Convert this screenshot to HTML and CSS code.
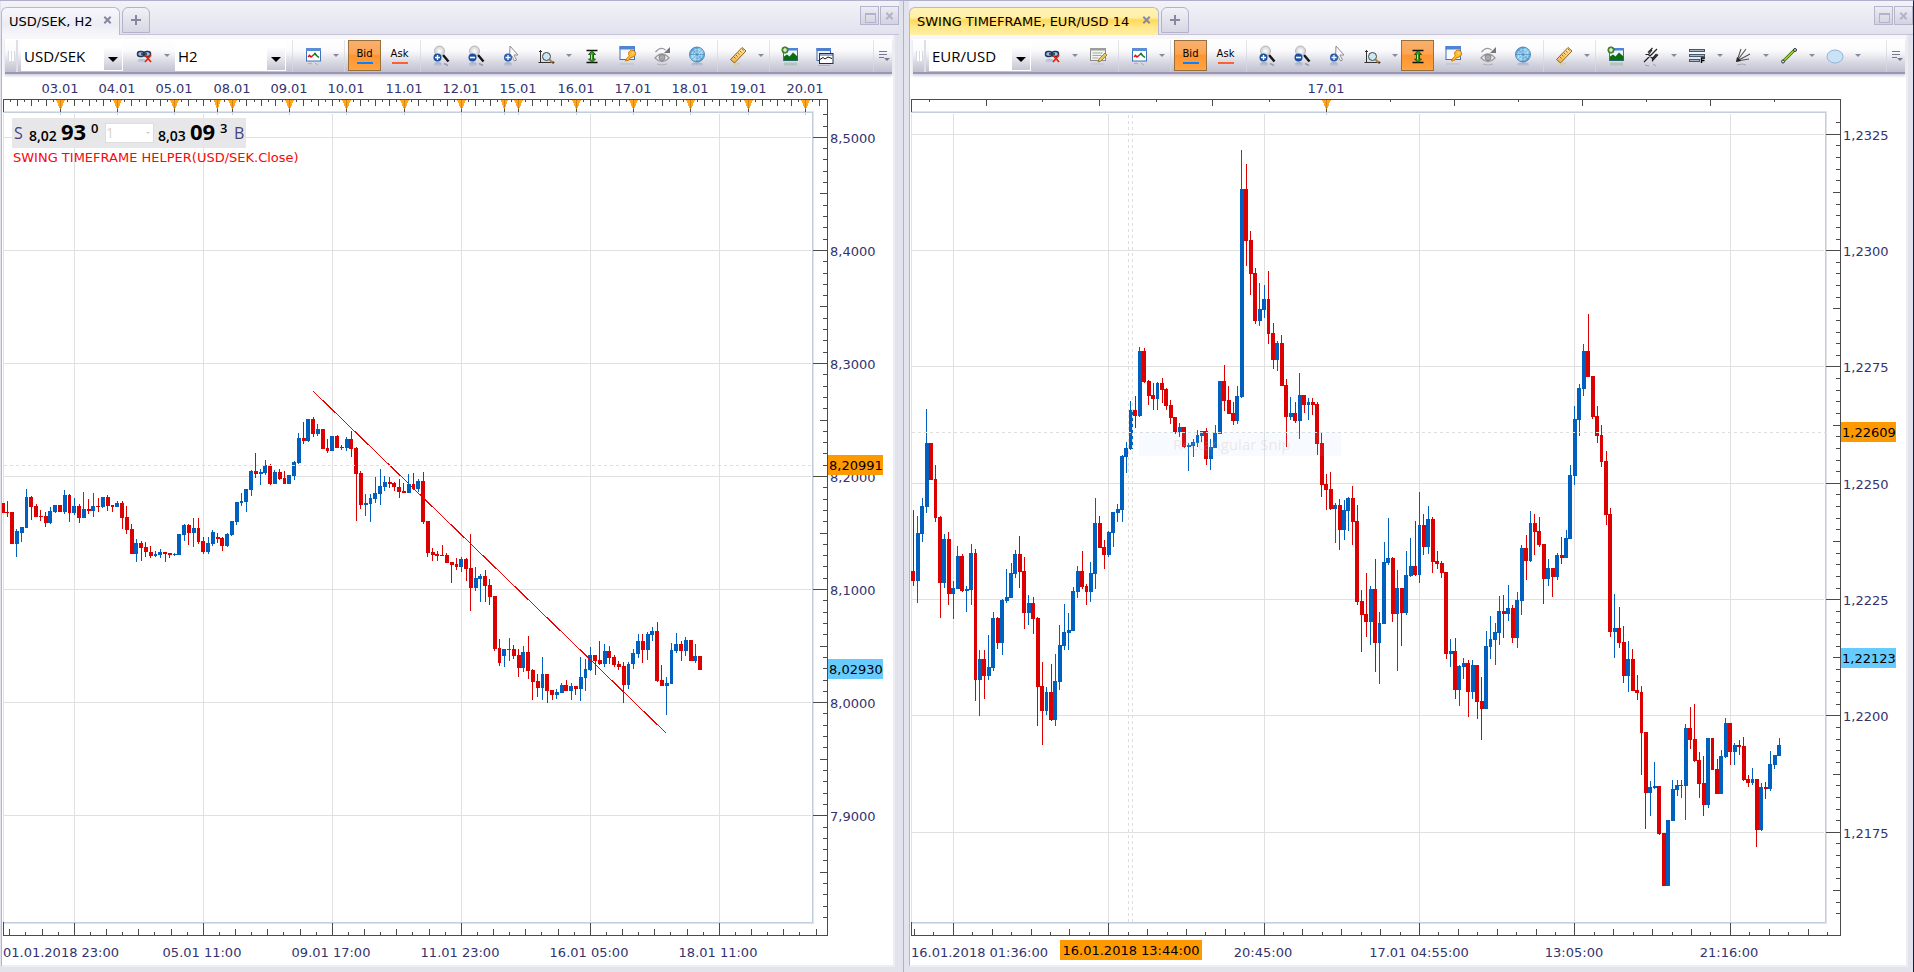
FILE: index.html
```html
<!DOCTYPE html>
<html lang="en">
<head>
<meta charset="utf-8">
<title>Trading charts</title>
<link rel="stylesheet" href="styles.css">
</head>
<body>
<svg class="defs" aria-hidden="true">
  <defs>
    <linearGradient id="gOrange" x1="0" y1="0" x2="0" y2="1"><stop offset="0" stop-color="#ffe9a8"/><stop offset="1" stop-color="#f2b040"/></linearGradient>
    <linearGradient id="gGlobe" x1="0" y1="0" x2="1" y2="1"><stop offset="0" stop-color="#3f86c4"/><stop offset="0.5" stop-color="#a5dcf5"/><stop offset="1" stop-color="#3d8cc8"/></linearGradient>
    <radialGradient id="gGlass"><stop offset="0" stop-color="#ffffff"/><stop offset="1" stop-color="#cfcfd2"/></radialGradient>
    <linearGradient id="gFade" x1="0" y1="0" x2="0" y2="1"><stop offset="0" stop-color="#5577b0" stop-opacity="0.45"/><stop offset="1" stop-color="#5577b0" stop-opacity="0"/></linearGradient>

    <symbol id="i-unlink" viewBox="0 0 24 24">
      <rect x="5.500" y="7.500" width="6.500" height="5" rx="2.500" fill="#9fc0e8" stroke="#26364f" stroke-width="1.500"/>
      <rect x="12" y="7.500" width="6.500" height="5" rx="2.500" fill="#9fc0e8" stroke="#26364f" stroke-width="1.500"/>
      <path d="M9 10h6" stroke="#26364f" stroke-width="1.600"/>
      <path d="M13 11l6 7M19 11l-6 7" stroke="#f02000" stroke-width="1.800"/>
      <ellipse cx="9.500" cy="17" rx="4" ry="2" fill="url(#gFade)"/>
    </symbol>
    <symbol id="i-chart" viewBox="0 0 24 24">
      <rect x="5.500" y="4.500" width="14" height="12.500" fill="#fff" stroke="#3f70b8"/>
      <rect x="5" y="4" width="15" height="3" fill="#5a8cd8"/>
      <path d="M7 13l1.500-1.500 1.500 1.500 2.500-2" stroke="#e01010" stroke-width="1.600" fill="none"/>
      <path d="M12.500 11l1.500-1.500 1.500 2 2.500 2" stroke="#0a7a20" stroke-width="1.600" fill="none"/>
      <path d="M7 20l2-1 2 1" stroke="#e89090" fill="none"/><path d="M14 19l3 2" stroke="#90c0a0" fill="none"/>
    </symbol>
    <symbol id="i-glass" viewBox="0 0 24 24">
      <path d="M14 11l5.500 6.500" stroke="#151515" stroke-width="2.400"/>
      <circle cx="10.500" cy="7" r="5" fill="url(#gGlass)" stroke="#b8b8bc"/>
      <circle cx="8.500" cy="13.500" r="4" fill="#1d4f9f"/>
      <ellipse cx="9" cy="20.500" rx="4" ry="2.500" fill="url(#gFade)"/>
      <path d="M15 19.500l4 2" stroke="#9a9aa4" stroke-width="1.500"/>
    </symbol>
    <symbol id="i-zoomin" viewBox="0 0 24 24"><use href="#i-glass"/><path d="M6 13.500h5M8.500 11v5" stroke="#fff" stroke-width="1.400"/></symbol>
    <symbol id="i-zoomout" viewBox="0 0 24 24"><use href="#i-glass"/><path d="M6 13.500h5" stroke="#fff" stroke-width="1.600"/></symbol>
    <symbol id="i-cursor" viewBox="0 0 24 24">
      <path d="M11 2l8 9h-4l2.500 5-2 1-2.500-5-2.500 2z" fill="#fafafa" stroke="#8c8c90"/>
      <circle cx="9" cy="13.500" r="4" fill="#2a5ca8"/><path d="M6.500 13.500h5M9 11v5" stroke="#fff" stroke-width="1.300"/>
      <ellipse cx="9" cy="20.500" rx="4" ry="2.500" fill="url(#gFade)"/>
    </symbol>
    <symbol id="i-axis" viewBox="0 0 24 24">
      <path d="M6.500 6v13M5 8l1.500-1.500L8 8M4.500 18.500H20M18.500 17l1.500 1.500-1.500 1.500" stroke="#333" fill="none"/>
      <circle cx="12.500" cy="12.500" r="4" fill="#c8eaf5" stroke="#444"/><path d="M15.500 15.500l3 3" stroke="#c87820" stroke-width="2"/>
    </symbol>
    <symbol id="i-height" viewBox="0 0 24 24">
      <path d="M6.500 6.500h11M6.500 18.500h11" stroke="#111" stroke-width="1.400"/>
      <path d="M12 6.500l3.500 4h-2v4.500h2l-3.500 3.500-3.500-3.500h2v-4.500h-2z" fill="#2e9a18" stroke="#0d4008" stroke-width="0.800"/>
      <path d="M11.500 10.500v5" stroke="#b0ee90"/>
    </symbol>
    <symbol id="i-key" viewBox="0 0 24 24">
      <rect x="5" y="3" width="14.500" height="12.500" fill="#f6f9ff" stroke="#3f70b8"/><rect x="4.500" y="2" width="15.500" height="3.500" fill="#4f83d4"/>
      <path d="M10.500 17l1-2.500 3-2.500a3.500 3.500 0 1 1 3.500 1l-3 1-1 2z" fill="#ffbe30" stroke="#d07808"/>
      <path d="M17 9.500l1.500-1" stroke="#fff4c0"/>
      <path d="M5 20h14" stroke="#c3c8dc" stroke-width="2"/>
    </symbol>
    <symbol id="i-eye" viewBox="0 0 24 24">
      <path d="M5 14q7-8 14 0-7 7-14 0z" fill="#f2f2f2" stroke="#9a9a9e" stroke-width="1.300"/><circle cx="12" cy="13.500" r="3" fill="#aaa" stroke="#858588"/>
      <path d="M5.500 8q5-6 10-2" stroke="#9a9a9e" fill="none" stroke-width="1.300"/><path d="M20 3v6h-6z" fill="#77777b"/>
      <path d="M7 20q5 2 10 0" stroke="#b0b0b8" fill="none"/>
    </symbol>
    <symbol id="i-globe" viewBox="0 0 24 24">
      <circle cx="12" cy="10.500" r="7.500" fill="url(#gGlobe)" stroke="#3378b0" stroke-width="0.800"/>
      <circle cx="12" cy="10.500" r="5" fill="none" stroke="#d8f2ff" stroke-width="0.600"/><circle cx="12" cy="10.500" r="2.500" fill="none" stroke="#d8f2ff" stroke-width="0.600"/>
      <path d="M4.500 10.500h15M12 3v15M7 5.500l10 10M17 5.500l-10 10" stroke="#2c74b0" stroke-width="0.500"/>
      <ellipse cx="12" cy="20.500" rx="6" ry="2" fill="url(#gFade)"/>
    </symbol>
    <symbol id="i-ruler" viewBox="0 0 24 24">
      <path d="M4.500 15.500L16 3.500l4 3.500L8.500 19z" fill="url(#gOrange)" stroke="#8f6418"/>
      <path d="M8 13l1.500 1.500M10 11l1.500 1.500M12 9l1.500 1.500M14 7l1.500 1.500M16 5l1.500 1.500" stroke="#7a5412" stroke-width="0.800"/>
      <path d="M8 21l6-2" stroke="#dccaa0" stroke-width="1.500"/>
    </symbol>
    <symbol id="i-image" viewBox="0 0 24 24">
      <rect x="5.500" y="4.500" width="14" height="12" fill="#eaf4ff" stroke="#3b6cc0"/><rect x="8" y="4" width="12" height="2.500" fill="#4f83d4"/>
      <path d="M6 16.500v-4l3-2 2.500 2 3.500-4 4.500 4v4z" fill="#0d6b10"/>
      <circle cx="7" cy="6" r="3.200" fill="#4f9a28" stroke="#2d6612" stroke-width="0.700"/><path d="M5 6h4M7 4v4" stroke="#fff" stroke-width="1.200"/>
      <rect x="6" y="18.500" width="13" height="3" fill="#6aa070" opacity="0.300"/>
    </symbol>
    <symbol id="i-windows" viewBox="0 0 24 24">
      <rect x="4" y="4.500" width="13.500" height="12" fill="#eef3fc" stroke="#4467a8"/><rect x="3.500" y="4" width="14.500" height="3" fill="#4f7fd0"/>
      <rect x="6.500" y="9.500" width="13.500" height="10" fill="#fff" stroke="#1e2f50"/><path d="M6.500 11h13.500" stroke="#3a5a98"/>
      <path d="M7 15.500l3-2 2 1.500 3-2 4 1.500" stroke="#111" fill="none"/><path d="M5 21.500h12" stroke="#a8b0cc"/>
    </symbol>
    <symbol id="i-note" viewBox="0 0 24 24">
      <rect x="4.500" y="4.500" width="15" height="12" fill="#f2f2f0" stroke="#8b8b8b"/><rect x="4" y="4" width="16" height="2.500" fill="#9c9c9c"/>
      <path d="M6.500 9h10M6.500 11.500h9M6.500 14h6" stroke="#9fae96"/><path d="M12 18l1-3 6-6 2 2-6 6z" fill="#e6c860" stroke="#8a7420" stroke-width="0.800"/>
      <path d="M5 20h13" stroke="#c8c8d4" stroke-width="1.500"/>
    </symbol>
    <symbol id="i-fork" viewBox="0 0 24 24">
      <path d="M5 18L18 5M6.500 10.500h3l4 4v3M9 8.500L13.500 4M14 16L19 10.500M9.500 10.500L13 6M13.500 14.500l4-4.500" stroke="#222" stroke-width="1.200" fill="none"/>
      <path d="M6 21l4 1M14 20l3 2" stroke="#a0a0ac"/>
    </symbol>
    <symbol id="i-fibo" viewBox="0 0 24 24">
      <path d="M4 6.500h16M4 11.500h16M4 16.500h11" stroke="#46586c" stroke-width="3.200"/><path d="M5 6.500h14M5 11.500h14M5 16.500h9" stroke="#c4d0dc" stroke-width="0.800"/>
      <path d="M16.500 19v-5h3.500M16.500 16.500h3" stroke="#000" stroke-width="1.400" fill="none"/>
    </symbol>
    <symbol id="i-fan" viewBox="0 0 24 24">
      <path d="M6 17L10 5M6 17L15 5M6 17L19 10M6 17l12-2" stroke="#555" stroke-width="1.100"/><path d="M5 18l1-5 4 4z" fill="#222"/>
      <path d="M6 21q6-2 9 0" stroke="#a8a8b4" fill="none"/>
    </symbol>
    <symbol id="i-line" viewBox="0 0 24 24">
      <path d="M6.500 17L17.500 6" stroke="#3a6c08" stroke-width="3"/><path d="M6.500 17L17.500 6" stroke="#9cd820" stroke-width="1.500"/>
      <circle cx="6" cy="17.500" r="1.500" fill="#ddd" stroke="#333"/><circle cx="18" cy="6" r="1.500" fill="#ddd" stroke="#333"/>
    </symbol>
    <symbol id="i-ellipse" viewBox="0 0 24 24"><ellipse cx="12" cy="12.500" rx="8" ry="6.500" fill="#cbe2f6" stroke="#92b4d6"/></symbol>
    <symbol id="i-more" viewBox="0 0 24 24"><path d="M7 7.500h8M7 10.500h8M7 13.500h5" stroke="#77778f" stroke-width="1.200"/><path d="M12 14h6l-3 3z" fill="#77778f"/></symbol>
  </defs>
</svg>

<main class="workspace">
  <section class="pane pane-left" aria-label="USD/SEK chart">
    <header class="strip">
      <div class="tab"><span>USD/SEK, H2</span><button class="tab-x" aria-label="Close tab"></button></div>
      <button class="tab-add" aria-label="New tab"></button>
      <div class="winbtns"><button class="win win-max" aria-label="Maximise"></button><button class="win win-close" aria-label="Close"></button></div>
    </header>
    <div class="content">
      <div class="toolwrap"><div class="toolbar" role="toolbar" aria-label="Chart tools">
        <span class="grip"></span>
        <div class="combo"><select aria-label="Instrument"><option>USD/SEK</option></select></div>
        <button class="tool" aria-label="Link"><svg><use href="#i-unlink"/></svg></button><button class="drop" aria-label="Link options"></button>
        <div class="combo combo-wide"><select aria-label="Timeframe"><option>H2</option></select></div>
        <span class="sep"></span>
        <button class="tool" aria-label="Chart type"><svg><use href="#i-chart"/></svg></button><button class="drop" aria-label="Chart types"></button>
        <span class="sep"></span>
        <button class="tool side bid on">Bid</button><button class="tool side ask">Ask</button>
        <span class="sep"></span>
        <button class="tool" aria-label="Zoom in"><svg><use href="#i-zoomin"/></svg></button>
        <button class="tool" aria-label="Zoom out"><svg><use href="#i-zoomout"/></svg></button>
        <button class="tool" aria-label="Zoom area"><svg><use href="#i-cursor"/></svg></button>
        <button class="tool" aria-label="Axis zoom"><svg><use href="#i-axis"/></svg></button><button class="drop" aria-label="Axis options"></button>
        <button class="tool" aria-label="Fit height"><svg><use href="#i-height"/></svg></button>
        <button class="tool" aria-label="Properties"><svg><use href="#i-key"/></svg></button>
        <button class="tool" aria-label="Show"><svg><use href="#i-eye"/></svg></button>
        <button class="tool" aria-label="Online"><svg><use href="#i-globe"/></svg></button>
        <span class="sep"></span>
        <button class="tool" aria-label="Measure"><svg><use href="#i-ruler"/></svg></button><button class="drop" aria-label="Measure options"></button>
        <span class="sep"></span>
        <button class="tool" aria-label="Add indicator"><svg><use href="#i-image"/></svg></button>
        <button class="tool" aria-label="Windows"><svg><use href="#i-windows"/></svg></button>
        <span class="sep sep-end"></span>
        <button class="more" aria-label="More tools"><svg><use href="#i-more"/></svg></button>
      </div></div>
      <div class="plot">
        <svg class="chart" id="chart-left" role="img" aria-label="USD/SEK candles"></svg>
        <div class="overlay">
          <div class="quote">
            <span class="q-side">S</span><span class="q-base">8,02</span><span class="q-big">93</span><span class="q-pip">0</span>
            <div class="q-amount"><select aria-label="Amount"><option>1</option></select></div>
            <span class="q-base">8,03</span><span class="q-big">09</span><span class="q-pip">3</span><span class="q-side">B</span>
          </div>
          <div class="study">SWING TIMEFRAME HELPER(USD/SEK.Close)</div>
        </div>
      </div>
    </div>
  </section>

  <section class="pane pane-right" aria-label="EUR/USD chart">
    <header class="strip">
      <div class="tab tab-gold"><span>SWING TIMEFRAME, EUR/USD 14</span><button class="tab-x" aria-label="Close tab"></button></div>
      <button class="tab-add" aria-label="New tab"></button>
      <div class="winbtns"><button class="win win-max" aria-label="Maximise"></button><button class="win win-close" aria-label="Close"></button></div>
    </header>
    <div class="content">
      <div class="toolwrap"><div class="toolbar" role="toolbar" aria-label="Chart tools">
        <span class="grip"></span>
        <div class="combo"><select aria-label="Instrument"><option>EUR/USD</option></select></div>
        <button class="tool" aria-label="Link"><svg><use href="#i-unlink"/></svg></button><button class="drop" aria-label="Link options"></button>
        <button class="tool" aria-label="Edit"><svg><use href="#i-note"/></svg></button>
        <span class="sep"></span>
        <button class="tool" aria-label="Chart type"><svg><use href="#i-chart"/></svg></button><button class="drop" aria-label="Chart types"></button>
        <span class="sep"></span>
        <button class="tool side bid on">Bid</button><button class="tool side ask">Ask</button>
        <span class="sep"></span>
        <button class="tool" aria-label="Zoom in"><svg><use href="#i-zoomin"/></svg></button>
        <button class="tool" aria-label="Zoom out"><svg><use href="#i-zoomout"/></svg></button>
        <button class="tool" aria-label="Zoom area"><svg><use href="#i-cursor"/></svg></button>
        <button class="tool" aria-label="Axis zoom"><svg><use href="#i-axis"/></svg></button><button class="drop" aria-label="Axis options"></button>
        <button class="tool on" aria-label="Fit height"><svg><use href="#i-height"/></svg></button>
        <button class="tool" aria-label="Properties"><svg><use href="#i-key"/></svg></button>
        <button class="tool" aria-label="Show"><svg><use href="#i-eye"/></svg></button>
        <button class="tool" aria-label="Online"><svg><use href="#i-globe"/></svg></button>
        <span class="sep"></span>
        <button class="tool" aria-label="Measure"><svg><use href="#i-ruler"/></svg></button><button class="drop" aria-label="Measure options"></button>
        <span class="sep"></span>
        <button class="tool" aria-label="Add indicator"><svg><use href="#i-image"/></svg></button>
        <button class="tool" aria-label="Pitchfork"><svg><use href="#i-fork"/></svg></button><button class="drop" aria-label="Pitchfork options"></button>
        <button class="tool" aria-label="Fibonacci"><svg><use href="#i-fibo"/></svg></button><button class="drop" aria-label="Fibonacci options"></button>
        <button class="tool" aria-label="Fan"><svg><use href="#i-fan"/></svg></button><button class="drop" aria-label="Fan options"></button>
        <button class="tool" aria-label="Line"><svg><use href="#i-line"/></svg></button><button class="drop" aria-label="Line options"></button>
        <button class="tool" aria-label="Ellipse"><svg><use href="#i-ellipse"/></svg></button><button class="drop" aria-label="Shape options"></button>
        <span class="sep sep-end"></span>
        <button class="more" aria-label="More tools"><svg><use href="#i-more"/></svg></button>
      </div></div>
      <div class="plot">
        <svg class="chart" id="chart-right" role="img" aria-label="EUR/USD candles"></svg>
      </div>
    </div>
  </section>
</main>
<script src="charts.js"></script>
</body>
</html>
```

FILE: styles.css
```css
* { box-sizing: border-box; }
html, body { height: 100%; margin: 0; }
body { background: #e3e3ee; font: 13px "DejaVu Sans", Verdana, sans-serif; color: #000; overflow: hidden; }
button, select { font: inherit; color: inherit; margin: 0; padding: 0; border: 0; background: none; }
.defs { position: absolute; width: 0; height: 0; }

.workspace { display: flex; height: 100vh; }
.pane { display: flex; flex-direction: column; min-width: 0; border-top: 1px solid #b0aecb; padding-bottom: 5px; }
.pane-left { flex: 894 1 0; padding-left: 1px; padding-right: 8px; }
.pane-right { flex: 999 1 0; border-left: 1px solid #b3b1c8; padding-left: 5px; padding-right: 5px; border-right: 1px solid #1c1c34; }

.strip { display: flex; align-items: flex-start; height: 34px; flex: none; padding-top: 5px; background: linear-gradient(#f2f2f8, #e2e2ee); border-bottom: 1px solid #c6c3d8; }
.pane-left .strip { margin-right: -4px; }
.pane-right .strip { margin-right: -5px; }
.tab { display: flex; align-items: center; justify-content: space-between; min-width: 119px; height: 28px; margin-top: 1px; padding: 0 7px; border: 1px solid #b9b7ce; border-bottom: 0; border-radius: 6px 6px 0 0; background: linear-gradient(#f7f7fb, #ececf4 60%, #f6f6fa); white-space: nowrap; }
.tab-gold { min-width: 250px; background: linear-gradient(#fff3b4, #fff0a8 35%, #ffd957 45%, #ffe88c 70%, #fff0a4); }
.tab-x { position: relative; width: 9px; height: 12px; align-self: flex-start; margin-top: 6px; }
.tab-x::before, .tab-x::after, .win-close::before, .win-close::after { content: ""; position: absolute; left: 0; top: 5px; width: 9px; height: 2px; background: #8886a4; transform: rotate(45deg); }
.tab-x::after, .win-close::after { transform: rotate(-45deg); }
.tab-add { position: relative; width: 28px; height: 26px; margin: 1px 0 0 2px; border: 1px solid #b4b2ca; border-radius: 6px 6px 0 0; background: linear-gradient(#f1f1f7, #d7d7e3); }
.tab-add::before, .tab-add::after { content: ""; position: absolute; left: 8px; top: 11px; width: 10px; height: 2px; background: #8886a0; }
.tab-add::after { left: 12px; top: 7px; width: 2px; height: 10px; }
.winbtns { display: flex; gap: 1px; margin-left: auto; }
.win { position: relative; width: 19px; height: 19px; border: 1px solid #b6b4cc; background: linear-gradient(#ececf4, #d3d3e0); }
.win-max::before { content: ""; position: absolute; left: 4px; top: 6px; width: 9px; height: 7px; border: 1px solid #b4b2ca; border-top-width: 2px; }
.win-close::before, .win-close::after { left: 4px; top: 8px; background: #b4b2ca; }

.content { display: flex; flex-direction: column; flex: 1; min-height: 0; background: #fff; border-left: 1px solid #b5b3ca; border-right: 2px solid #ededf4; border-bottom: 2px solid #ededf4; }
.toolwrap { flex: none; height: 43px; padding: 4px 1px 0 3px; background: linear-gradient(#f7f7fa, #f4f4f8 90%, #fff); }
.toolbar { display: flex; align-items: center; height: 35px; background: linear-gradient(#fff, #fbfbfd 35%, #d9d9e3 70%, #c0c0d0); border-bottom: 2px solid #9896b2; box-shadow: 0 2px 2px #d6d5e2; }
.grip { width: 13px; height: 32px; flex: none; border-right: 2px solid #dedee8; background: repeating-linear-gradient(90deg, #d8d8e2 0 1px, #fff 1px 3px) 3px 11px / 7px 10px no-repeat; }
.combo { position: relative; flex: none; width: 102px; height: 30px; margin: 0 3px; background: #fff; }
.combo-wide { width: 111px; }
.combo select { width: 100%; height: 100%; padding: 0 20px 0 3px; appearance: none; font: 15px "Open Sans", "Noto Sans", sans-serif; }
.combo::after { content: ""; position: absolute; right: 1px; top: 6px; width: 18px; height: 23px; pointer-events: none; background: linear-gradient(#fff, #ececf2 40%, #c6c6d4); }
.combo::before { content: ""; position: absolute; z-index: 1; right: 5px; top: 16px; border: 5px solid transparent; border-top-color: #000; border-bottom: 0; pointer-events: none; }
.tool { flex: none; display: flex; align-items: center; justify-content: center; width: 35px; height: 31px; }
.tool svg { width: 24px; height: 24px; }
.on { width: 33px; margin: 0 1px; border: 1px solid #9a6f38; background: linear-gradient(#f9b070, #fda452 45%, #ff9430 50%, #ffa443); }
.side { flex-direction: column; gap: 1px; font-size: 10px; line-height: 14px; padding-bottom: 0; }
.side::after { content: ""; width: 16px; height: 2px; background: #0a80ff; }
.ask::after { background: #ff6030; }
.drop { flex: none; position: relative; width: 11px; height: 31px; }
.drop::before { content: ""; position: absolute; left: 3px; top: 14px; border: 3px solid transparent; border-top-color: #8a889e; border-bottom: 0; }
.sep { flex: none; width: 6px; height: 32px; background: linear-gradient(#e6e6ee, #d2d2de) 3px 0 / 1px 100% no-repeat; }
.sep-end { margin-left: auto; }
.more { flex: none; width: 16px; height: 31px; display: flex; align-items: center; justify-content: center; }
.more svg { width: 24px; height: 24px; flex: none; }

.plot { display: grid; flex: 1; min-height: 0; }
.chart, .overlay { grid-area: 1 / 1; }
.chart { width: 100%; height: 100%; min-height: 0; display: block; overflow: hidden; }
.axis { font: 13px "DejaVu Sans", Verdana, sans-serif; fill: #33336e; }
.tagtext { font: 13px "DejaVu Sans", Verdana, sans-serif; fill: #000; }
.ghost { font: 15px "Open Sans", sans-serif; fill: #c8a8a0; fill-opacity: 0.25; }

.overlay { justify-self: start; align-self: start; padding: 40px 0 0 10px; }
.quote { display: flex; align-items: center; width: 234px; height: 30px; padding: 0 0 0 2px; background: #e4e4e6e0; font-family: "Open Sans", "Noto Sans", sans-serif; }
.quote > * { flex: none; }
.q-side { width: 15px; color: #44447e; font-size: 16px; }
.q-base { width: 32px; font-size: 14px; font-weight: 600; align-self: flex-end; line-height: 24px; }
.q-big { width: 30px; font-size: 22px; font-weight: 700; line-height: 26px; align-self: flex-start; }
.q-pip { width: 14px; font-size: 13px; font-weight: 600; align-self: flex-start; line-height: 21px; }
.q-amount { position: relative; width: 49px; height: 20px; margin-right: 4px; background: #fff; border: 1px solid #dedede; }
.q-amount select { display: block; width: 100%; height: 100%; padding: 0 12px 0 0; appearance: none; color: #dcd2ca; font-size: 14px; line-height: 18px; }
.q-amount::after { content: ""; position: absolute; right: 3px; top: 8px; border: 2px solid transparent; border-top-color: #ccc; border-bottom: 0; pointer-events: none; }
.study { margin-top: 1px; padding-left: 1px; color: #f80808; line-height: 18px; white-space: nowrap; }
```

FILE: charts.js
```js
// Each bar: colour (r/b), high, body top, body bottom, low. Prices are in
// thirds of a grid unit, counted down from the segment's base.
const LEFT = {
  id: 'chart-left', ox: 2, oy: 78, w: 891, h: 887,
  x0: 3, plotR: 812, axisR: 827, first: -15, barX: 74.33, pitch: 4.7778,
  segments: [
    [1140, `r369,369,399,399 r363,396,399,411 r396,396,492,492 b447,453,492,531 b441,441,458,486 b327,351,444,444
    r348,351,381,420 r372,378,411,411 r390,407,410,423 r396,408,429,441 b381,393,429,432 b375,375,396,399 r375,375,396,396
    b330,345,396,402 r342,345,399,426 b354,378,399,405 r372,378,414,429 b336,387,414,414 r357,387,393,402 b339,378,393,411
    r354,378,381,396 b351,351,381,384 r345,351,378,393 r375,375,381,396 b363,369,381,381 r363,369,414,447 r378,411,450,462
    r432,447,522,522 b477,489,522,546 r483,489,504,543 r486,501,516,531 r498,516,528,534 b513,522,528,531 b507,516,525,534
    r516,516,522,546 r519,519,525,534 b519,522,525,528 b462,462,525,525 b432,435,465,483 r432,435,459,495 b414,444,459,501
    r414,444,486,492 r471,483,516,522 b471,489,516,522 b450,456,492,498 r459,471,477,489 r471,474,498,513 b459,462,498,501
    b423,423,465,468 b366,366,426,435 b339,363,369,378 b327,327,366,396 b270,273,330,348 r219,273,282,294 b267,276,282,315
    b240,255,279,285 r252,258,312,315 b270,276,312,312 r267,276,297,300 r273,294,312,312 b285,285,312,312 b243,246,288,300
    b159,174,249,252 r126,174,183,192 b117,117,183,186 r111,117,162,171 b132,147,162,168 r147,147,207,207 r177,204,213,219
    b168,168,213,213 r165,168,204,204 r195,201,204,210 b171,177,204,213 r153,177,207,231 r201,204,282,423 r273,279,375,387
    b342,369,375,408 b342,354,372,426 b291,339,357,369 b267,318,342,375 b288,306,321,333 r291,306,312,324 r306,309,321,333
    r297,321,336,354 r309,333,339,339 b282,312,339,339 r279,312,327,330 b297,303,327,336 r276,303,426,432 r423,423,519,531
    r504,516,525,543 r513,522,528,543 r495,525,528,528 r519,525,549,549`],
    [1200, `r486,486,495,549 r474,492,501,510 b471,477,501,516 r474,477,507,543 r402,504,564,633 b501,534,564,573
    b522,528,537,606 r510,528,558,606 r537,555,591,615 r588,588,747,753 r717,744,789,798 b747,747,768,801 b714,747,750,783
    r735,747,768,777 r747,765,804,831 b738,756,804,816 r708,756,813,837 r807,810,846,900 r822,843,864,891 b771,822,864,900
    r822,822,873,909 r870,870,885,900 b867,876,885,897 b849,855,879,879 r840,855,873,873 b849,858,873,900 r858,858,867,885
    b771,831,867,903 b777,807,834,873 b741,765,810,813 r765,765,783,825 r723,780,792,795 b732,753,792,801 r738,753,774,792
    r765,771,795,801 r783,792,801,810 r786,798,855,909 b786,792,855,867 b747,759,792,807 b702,723,762,774 r702,723,750,789
    b696,702,750,780 b681,693,705,723 r666,693,843,846 r795,840,858,858 b831,849,858,945 b729,750,852,852 b699,732,753,759
    r723,732,753,783 b711,720,753,768 r720,720,783,783 b732,768,783,789 r768,768,810,810`],
  ],
  grid: { x: 74.33, dx: 129, labels: ['01.01.2018 23:00', '05.01 11:00', '09.01 17:00', '11.01 23:00', '16.01 05:00', '18.01 11:00'], from: -4, to: 46 },
  price: { y: 137.33, dy: 113.07, labels: ['8,5000', '8,4000', '8,3000', '8,2000', '8,1000', '8,0000', '7,9000'], from: -2, to: 69 },
  days: [[60, '03.01'], [117, '04.01'], [174, '05.01'], [217, ''], [232, '08.01'], [289, '09.01'], [346, '10.01'], [404, '11.01'],
    [461, '12.01'], [504, ''], [518, '15.01'], [576, '16.01'], [633, '17.01'], [690, '18.01'], [748, '19.01'], [805, '20.01']],
  dayStep: 7.17, crossY: 465, crossX: [],
  tags: [[455, '8,20991', '#ff9900'], [659, '8,02930', '#66ccff']],
  trend: [313, 391, 666, 733],
};

const RIGHT = {
  id: 'chart-right', ox: 910, oy: 78, w: 996, h: 887,
  x0: 911, plotR: 1825, axisR: 1840, first: -9, barX: 953.33, pitch: 4.44,
  segments: [
    [1140, `r390,573,603,618 b408,459,603,669 b354,378,462,486 b87,189,381,399 r189,189,300,300 r255,297,414,426
    r408,411,609,714 b462,477,609,624 r456,477,642,675 b603,624,642,717 b498,528,627,627 r522,528,633,636 b618,627,633,696
    b492,519,630,675 r507,519,900,963 b810,837,900,1008 r810,837,888,957 b765,861,888,900 b696,714,864,873 r711,714,789,807
    b657,660,789,825 b567,651,663,669 b549,579,654,654 b510,522,582,594 r468,522,576,624 r531,573,699,747 b645,669,699,735
    r651,669,717,762 r711,714,921,1038 r846,918,993,1095 b921,936,993,1005 r852,936,1020,1023 b822,903,1020,1038
    b735,795,906,930 b672,756,798,810 b699,750,759,810 b621,633,753,753 b558,573,636,654 r513,573,621,627 r612,618,636,675
    b546,579,636,666 b354,429,582,627 r408,429,504,504 r480,501,525,567 b453,456,525,531 b396,396,459,501 b372,387,399,426
    b225,228,390,426 b186,204,231,279 b63,90,207,210 r48,90,108,144`],
    [390, `b651,663,858,861 r654,663,756,759 r750,753,798,825 r759,795,807,840 b756,759,807,840 r744,759,780,819
    r774,777,828,840 r810,825,864,882 r861,861,906,912 b879,891,906,921 r891,891,951,954 b939,945,951,1023 b927,936,948,981
    b900,915,939,951 b903,903,918,936 r894,903,987,1005 b927,951,987,1020 b885,909,954,954 b753,753,912,912 r705,753,813,843
    r768,810,852,852 r816,849,873,885 b768,798,873,882 b60,177,801,804 r102,177,333,408 r303,330,432,495 r414,429,573,582
    b459,537,573,588 b465,507,540,564 r423,507,612,642 r579,609,690,717 b633,639,690,723 r615,639,768,768 r747,765,861,951
    b801,849,861,870 r816,849,873,879 b729,795,873,927 r795,795,825,849 b804,816,825,870 r804,816,825,855 r816,822,942,975
    r909,939,1065,1101`],
    [1320, `r102,132,150,210 r96,147,207,210 b189,195,207,309 r177,195,270,330 b180,210,270,300 b171,174,213,273
    r138,174,246,315 r195,243,486,495 r450,483,525,636 r399,522,546,591 b438,447,546,615 r357,447,609,696 b516,549,609,732
    b306,366,552,552 b234,354,369,375 r351,354,522,546 b390,444,522,693 r444,444,519,618 b333,405,519,525 b294,378,408,411
    r243,378,405,408 b156,255,405,429 r222,255,321,345 b198,237,321,342 r231,237,366,399 r333,363,372,387 r363,369,399,414
    r396,396,642,657 b597,633,642,681 r594,633,750,777 b675,678,750,798 b654,669,681,717 r660,669,756,831 b660,675,756,777
    r675,675,786,837 r711,783,807,900 b573,618,807,807 b528,597,621,657 b549,576,600,675 b468,513,579,615 r465,513,522,594
    b435,504,522,543 r495,504,594,609 b456,480,594,624 b315,324,483,525 r285,324,363,420 b213,249,363,366 r222,249,276,345
    r231,273,315,321 r312,312,417,492 b357,384,417,438 r384,384,411,471 b339,345,411,420 r291,345,354,372 b270,294,354,354
    b75,105,297,297`],
    [870, `b348,387,558,585 b282,294,390,438 b162,183,297,318 r72,183,261,261 r258,258,381,387 r348,378,438,459
    r405,435,516,531 r483,513,675,705 r654,672,1026,1041 b912,1014,1026,1104 r951,1014,1059,1074 r1008,1056,1158,1179`],
    [1920, `b3,57,108,156 r27,57,153,153 r105,150,159,180 r138,156,279,405 r276,276,459,567 b423,441,459,528 b366,438,444,447
    r438,438,582,585 r579,579,738,738 b540,540,738,738 b420,447,543,543 b420,435,450,468 b420,435,438,474 b252,264,438,540
    r201,264,300,327 r192,297,363,366 r336,360,432,474 r348,429,495,528 b294,294,495,504 r294,294,390,390 r357,387,462,462
    b330,348,462,462 b234,249,351,354 r249,249,336,375 b309,315,336,375 r300,315,321,345 r291,318,420,423 r405,417,429,441
    b384,417,429,435 r417,417,570,621 b429,441,570,573 r426,441,447,477 b333,372,447,453 b345,345,375,387 b294,315,348,348`],
  ],
  grid: { x: 953.33, dx: 155.4, labels: ['16.01.2018 01:36:00', '', '20:45:00', '17.01 04:55:00', '13:05:00', '21:16:00'], from: -2, to: 45 },
  price: { y: 134.33, dy: 116.33, labels: ['1,2325', '1,2300', '1,2275', '1,2250', '1,2225', '1,2200', '1,2175'], from: -1, to: 67 },
  days: [[1326, '17.01']],
  hours: [[929, 3], [986, 7], [1042, 3], [1099, 7], [1156, 3], [1212, 7], [1269, 3], [1390, 3], [1454, 7], [1518, 3], [1582, 7], [1646, 3], [1710, 7], [1774, 3]],
  crossY: 432, crossX: [1128, 1132],
  tags: [[422, '1,22609', '#ff9900'], [648, '1,22123', '#66ccff']],
  timeTag: [1060, 142, '16.01.2018 13:44:00'],
  ghost: [1139, 432, 202, 24, 'Rectangular Snip'],
};

const RED = '#dc0000', BLUE = '#0060c0', GRID = '#e0e0e0', INK = '#4b4b4b';
const TOP = 99, PLOT_T = 112, PLOT_B = 922, BOTTOM = 935;

function draw(c) {
  const svg = document.getElementById(c.id);
  const box = svg.getBoundingClientRect();
  const sx = box.width / c.w, sy = box.height / c.h;
  const X = x => Math.round((x - c.ox) * sx), Y = y => Math.round((y - c.oy) * sy);
  const out = [];
  const rect = (x, y, w, h, fill) => out.push(`<rect x="${x}" y="${y}" width="${w}" height="${h}" fill="${fill}"/>`);
  const vline = (x, a, b, fill) => rect(X(x), Y(a), 1, Y(b) - Y(a), fill);
  const hline = (a, b, y, fill) => rect(X(a), Y(y), X(b) - X(a), 1, fill);
  const text = (x, y, s, anchor, cls) => out.push(`<text x="${X(x)}" y="${Y(y)}" text-anchor="${anchor}" class="${cls}">${s}</text>`);
  const right = c.plotR;

  // Plot frame and grid
  vline(c.x0, 114, PLOT_B, GRID);
  c.grid.labels.forEach((s, i) => vline(Math.floor(c.grid.x + i * c.grid.dx), 114, PLOT_B, GRID));
  c.price.labels.forEach((s, i) => hline(c.x0, right - 1, Math.floor(c.price.y + i * c.price.dy), GRID));
  hline(c.x0, right + 2, PLOT_T - 1, '#e0e3e8');
  hline(c.x0, right + 1, PLOT_T, '#c3cedd');
  vline(right, PLOT_T, PLOT_B + 1, '#c3cedd');
  vline(right + 1, PLOT_T, PLOT_B + 2, '#e0e3e8');
  hline(c.x0, right + 1, PLOT_B, '#c3cedd');
  hline(c.x0, right + 2, PLOT_B + 1, '#dfe3e9');

  // Candles
  let k = c.first;
  for (const [base, bars] of c.segments) {
    for (const bar of bars.trim().split(/\s+/)) {
      const [hi, t, b, lo] = bar.slice(1).split(',').map(v => (base + Number(v)) / 3);
      const fill = bar[0] === 'r' ? RED : BLUE;
      const mid = c.barX + k * c.pitch;
      vline(Math.floor(mid), hi, lo, fill);
      const l = Math.max(X(c.x0), X(mid - 2)), r = X(mid + 1.9);
      rect(l, Y(t), r - l, Math.max(1, Y(b) - Y(t)), fill);
      k++;
    }
  }
  if (c.trend) {
    const [a, b, d, e] = c.trend;
    out.push(`<line x1="${X(a)}" y1="${Y(b)}" x2="${X(d)}" y2="${Y(e)}" stroke="#f00000"/>`);
  }

  // Crosshair
  const dash = (a, b, d, e) => out.push(`<line x1="${X(a) + 0.5}" y1="${Y(b) + 0.5}" x2="${X(d) + 0.5}" y2="${Y(e) + 0.5}" stroke="#dedede" stroke-dasharray="3 3"/>`);
  dash(c.x0, c.crossY, right, c.crossY);
  c.crossX.forEach(x => dash(x, 114, x, PLOT_B));
  if (c.ghost) {
    const [x, y, w, h, s] = c.ghost;
    out.push(`<rect x="${X(x)}" y="${Y(y)}" width="${w}" height="${h}" fill="#96d2ff" fill-opacity="0.08"/>`);
    text(x + 34, y + 18, s, 'start', 'ghost');
  }

  // Top ruler
  hline(c.x0, c.axisR + 1, TOP, INK);
  vline(c.x0, TOP, PLOT_T, INK);
  const ticks = c.hours ? c.hours.slice() : [];
  if (c.dayStep) {
    for (let i = 1; i < 8; i++) ticks.push([c.days[0][0] - i * c.dayStep, i % 2 ? 3 : 7]);
    c.days.forEach(([x], n) => {
      const end = n + 1 < c.days.length ? c.days[n + 1][0] - 3 : c.axisR - 6;
      for (let i = 1; x + i * c.dayStep < end; i++) ticks.push([x + i * c.dayStep, i % 2 ? 3 : 7]);
    });
  }
  ticks.forEach(([x, h]) => rect(X(x), Y(TOP), 1, h, INK));
  c.days.forEach(([x, s]) => {
    const px = X(x), py = Y(TOP), r = s ? 4 : 3;
    out.push(`<path d="M${px - r} ${py + 1}h${2 * r + 1}l${-r} 9h-1z" fill="#ffa520"/>`);
    rect(px, py + 1, 1, 9, '#d88410');
    rect(px, py + 10, 1, 3, INK);
    rect(px, py + 13, 1, 3, '#c3cedd');
    if (s) text(x, 93, s, 'middle', 'axis');
  });

  // Bottom ruler
  vline(c.x0, PLOT_B, BOTTOM, INK);
  for (let i = c.grid.from; i <= c.grid.to; i++) {
    const len = i >= 0 && i % 8 === 0 ? 12 : i % 2 ? 3 : 6;
    rect(X(Math.floor(c.grid.x + i * c.grid.dx / 8)), Y(BOTTOM) - len, 1, len, INK);
  }
  hline(c.x0, c.axisR + 1, BOTTOM, INK);
  c.grid.labels.forEach((s, i) => {
    if (i) text(c.grid.x + i * c.grid.dx - 1, 957, s, 'middle', 'axis');
    else text(c.x0, 957, s, 'start', 'axis');
  });

  // Price ruler
  vline(c.axisR, TOP, BOTTOM + 1, INK);
  for (let i = c.price.from; i <= c.price.to; i++) {
    const len = i % 10 === 0 ? 14 : i % 5 === 0 ? 7 : 4;
    rect(X(c.axisR) - len, Y(Math.floor(c.price.y + i * c.price.dy / 10)), len, 1, INK);
  }
  c.price.labels.forEach((s, i) => text(c.axisR + 3, Math.floor(c.price.y + i * c.price.dy) + 6, s, 'start', 'axis'));
  c.tags.forEach(([y, s, fill]) => {
    rect(X(c.axisR + 1), Y(y), 55, 20, fill);
    text(c.axisR + 2, y + 15, s, 'start', 'tagtext');
  });
  if (c.timeTag) {
    const [x, w, s] = c.timeTag;
    rect(X(x), Y(940), w, 20, '#ff9900');
    text(x + w / 2, 955, s, 'middle', 'tagtext');
  }
  svg.innerHTML = `<g shape-rendering="crispEdges">${out.join('')}</g>`;
}

function drawAll() { draw(LEFT); draw(RIGHT); }
drawAll();
window.addEventListener('resize', drawAll);
```
